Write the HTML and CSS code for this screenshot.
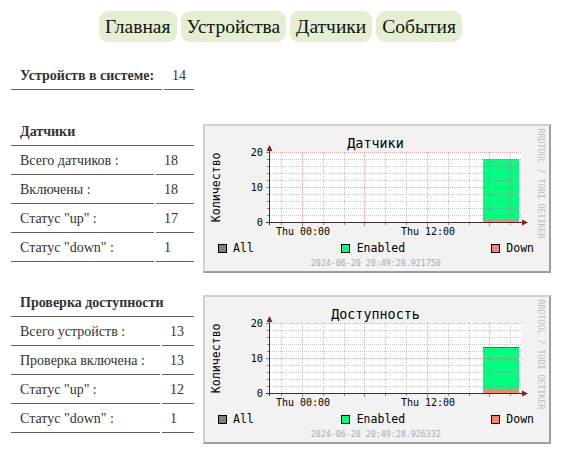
FILE: index.html
```html
<!DOCTYPE html>
<html lang="ru">
<head>
<meta charset="utf-8">
<title>Главная</title>
<link rel="stylesheet" href="styles.css">
</head>
<body>
<nav class="menu">
  <a class="tab" href="#">Главная</a>
  <a class="tab" href="#">Устройства</a>
  <a class="tab" href="#">Датчики</a>
  <a class="tab" href="#">События</a>
</nav>

<div class="stats stats-summary">
  <div class="cell label bold">Устройств в системе:</div>
  <div class="cell value">14</div>
</div>

<section class="block">
  <div class="stats stats-sensors">
    <div class="cell head">Датчики</div>
    <div class="cell label">Всего датчиков :</div><div class="cell value">18</div>
    <div class="cell label">Включены :</div><div class="cell value">18</div>
    <div class="cell label">Статус "up" :</div><div class="cell value">17</div>
    <div class="cell label">Статус "down" :</div><div class="cell value">1</div>
  </div>
  <div class="chart">
    <svg width="344" height="145" viewBox="2 2 344 145" xmlns="http://www.w3.org/2000/svg">
      <rect x="67" y="28" width="252" height="70.5" fill="#ffffff"/>
      <rect x="280" y="35" width="36" height="63.5" fill="#00ff80"/>
      <rect x="280" y="95" width="36" height="3.5" fill="#fa8072"/>
      <path class="minor" d="M78.5 28V98M120.5 28V98M141.5 28V98M182.5 28V98M203.5 28V98M245.5 28V98M266.5 28V98M307.5 28V98M67 35.5H319M67 42.5H319M67 49.5H319M67 56.5H319M67 70.5H319M67 77.5H319M67 84.5H319M67 91.5H319"/>
      <path class="major" d="M99.5 28V98M161.5 28V98M224.5 28V98M286.5 28V98M67 28.5H319M67 63.5H319"/>
      <path class="tick" d="M64 35.5H66M64 42.5H66M64 49.5H66M64 56.5H66M64 70.5H66M64 77.5H66M64 84.5H66M64 91.5H66M63 28.5H66M63 63.5H66M78.5 99V101M120.5 99V101M141.5 99V101M182.5 99V101M203.5 99V101M245.5 99V101M266.5 99V101M307.5 99V101M99.5 99V102M161.5 99V102M224.5 99V102M286.5 99V102"/>
      <path class="axis" d="M66.5 101V25M63 98.5H320"/>
      <path class="arrow" d="M63.5 27L69.5 27L66.5 21Z M319 95.5L319 101.5L325 98.5Z"/>
      <text class="title" x="172.5" y="24.3">Датчики</text>
      <text class="vlabel" transform="translate(17.3 63.3) rotate(-90)">Количество</text>
      <text class="ylab" x="60" y="32">20</text>
      <text class="ylab" x="60" y="67">10</text>
      <text class="ylab" x="60" y="102">0</text>
      <text class="xlab" x="100" y="111">Thu 00:00</text>
      <text class="xlab" x="225" y="111">Thu 12:00</text>
      <rect x="15.5" y="120.5" width="8" height="8" fill="#808080" stroke="#000"/>
      <text class="legend" x="30" y="127.7">All</text>
      <rect x="138.5" y="120.5" width="8" height="8" fill="#00ff80" stroke="#000"/>
      <text class="legend" x="153.7" y="127.7">Enabled</text>
      <rect x="288.5" y="120.5" width="8" height="8" fill="#fa8072" stroke="#000"/>
      <text class="legend" x="303.3" y="127.7">Down</text>
      <text class="stamp" x="172.8" y="141.7">2024-06-20 20:49:28.921750</text>
      <text class="mark" transform="translate(334.5 59.5) rotate(90)">RRDTOOL / TOBI OETIKER</text>
    </svg>
  </div>
</section>

<section class="block">
  <div class="stats stats-avail">
    <div class="cell head">Проверка доступности</div>
    <div class="cell label">Всего устройств :</div><div class="cell value">13</div>
    <div class="cell label">Проверка включена :</div><div class="cell value">13</div>
    <div class="cell label">Статус "up" :</div><div class="cell value">12</div>
    <div class="cell label">Статус "down" :</div><div class="cell value">1</div>
  </div>
  <div class="chart">
    <svg width="344" height="145" viewBox="2 2 344 145" xmlns="http://www.w3.org/2000/svg">
      <rect x="67" y="28" width="252" height="70.5" fill="#ffffff"/>
      <rect x="280" y="52.5" width="36" height="46" fill="#00ff80"/>
      <rect x="280" y="95" width="36" height="3.5" fill="#fa8072"/>
      <path class="allline" d="M280 52.5H316"/>
      <path class="minor" d="M78.5 28V98M120.5 28V98M141.5 28V98M182.5 28V98M203.5 28V98M245.5 28V98M266.5 28V98M307.5 28V98M67 35.5H319M67 42.5H319M67 49.5H319M67 56.5H319M67 70.5H319M67 77.5H319M67 84.5H319M67 91.5H319"/>
      <path class="major" d="M99.5 28V98M161.5 28V98M224.5 28V98M286.5 28V98M67 28.5H319M67 63.5H319"/>
      <path class="tick" d="M64 35.5H66M64 42.5H66M64 49.5H66M64 56.5H66M64 70.5H66M64 77.5H66M64 84.5H66M64 91.5H66M63 28.5H66M63 63.5H66M78.5 99V101M120.5 99V101M141.5 99V101M182.5 99V101M203.5 99V101M245.5 99V101M266.5 99V101M307.5 99V101M99.5 99V102M161.5 99V102M224.5 99V102M286.5 99V102"/>
      <path class="axis" d="M66.5 101V25M63 98.5H320"/>
      <path class="arrow" d="M63.5 27L69.5 27L66.5 21Z M319 95.5L319 101.5L325 98.5Z"/>
      <text class="title" x="172.5" y="24.3">Доступность</text>
      <text class="vlabel" transform="translate(17.3 63.3) rotate(-90)">Количество</text>
      <text class="ylab" x="60" y="32">20</text>
      <text class="ylab" x="60" y="67">10</text>
      <text class="ylab" x="60" y="102">0</text>
      <text class="xlab" x="100" y="111">Thu 00:00</text>
      <text class="xlab" x="225" y="111">Thu 12:00</text>
      <rect x="15.5" y="120.5" width="8" height="8" fill="#808080" stroke="#000"/>
      <text class="legend" x="30" y="127.7">All</text>
      <rect x="138.5" y="120.5" width="8" height="8" fill="#00ff80" stroke="#000"/>
      <text class="legend" x="153.7" y="127.7">Enabled</text>
      <rect x="288.5" y="120.5" width="8" height="8" fill="#fa8072" stroke="#000"/>
      <text class="legend" x="303.3" y="127.7">Down</text>
      <text class="stamp" x="172.8" y="141.7">2024-06-20 20:49:28.926332</text>
      <text class="mark" transform="translate(334.5 59.5) rotate(90)">RRDTOOL / TOBI OETIKER</text>
    </svg>
  </div>
</section>
</body>
</html>
```

FILE: styles.css
```css
body {
  margin: 8px;
  font-family: "Liberation Serif", "Times New Roman", serif;
  font-size: 14px;
  color: #333;
  background: #fff;
}

.menu {
  display: flex;
  justify-content: center;
  gap: 4px;
  margin-top: 3px;
  padding-right: 6px;
}

.tab {
  display: block;
  padding: 4px 6px;
  font-size: 19.5px;
  line-height: 23px;
  color: #111;
  text-decoration: none;
  background: #e3efd0;
  border-radius: 9px;
}

.stats {
  display: grid;
  column-gap: 2px;
  row-gap: 2px;
  margin-left: 3px;
  align-self: flex-start;
}

.stats-summary {
  grid-template-columns: 151px 30px;
  margin-top: 21px;
}

.stats-sensors {
  grid-template-columns: 143px 38px;
}

.stats-avail {
  grid-template-columns: 149px 32px;
}

.cell {
  padding: 5px 8px 5px 9px;
  line-height: 16px;
  border-bottom: 1px solid #665f5b;
  white-space: nowrap;
}

.value {
  padding-left: 8px;
}

.bold,
.head {
  font-weight: bold;
}

.head {
  grid-column: 1 / span 2;
}

.block {
  display: flex;
  align-items: flex-start;
  gap: 9px;
  margin-bottom: 17px;
}

.stats-summary + .block {
  margin-top: 29px;
}

.chart {
  margin-top: 5px;
  width: 344px;
  height: 145px;
  border: 2px solid;
  border-color: #cfcfcf #9e9e9e #9e9e9e #cfcfcf;
  background: #f2f2f2;
}

.chart svg {
  display: block;
}

.chart text {
  font-family: "DejaVu Sans Mono", monospace;
  fill: #000;
}

.minor {
  fill: none;
  stroke: rgba(130, 130, 130, 0.45);
  stroke-width: 1;
  stroke-dasharray: 1 1;
}

.major {
  fill: none;
  stroke: rgba(230, 80, 80, 0.5);
  stroke-width: 1;
  stroke-dasharray: 1 1;
}

.tick {
  fill: none;
  stroke: #8a8a8a;
  stroke-width: 1;
}

.axis {
  fill: none;
  stroke: #3a2e2e;
  stroke-width: 1;
}

.arrow {
  fill: #7f1f1f;
}

.allline {
  stroke: #666;
  stroke-width: 1;
}

.chart .title {
  font-size: 13.4px;
  text-anchor: middle;
}

.chart .vlabel {
  font-size: 11.6px;
  text-anchor: middle;
}

.chart .ylab {
  font-size: 10.2px;
  text-anchor: end;
}

.chart .xlab {
  font-size: 10px;
  text-anchor: middle;
}

.chart .legend {
  font-size: 11.5px;
}

.chart .stamp {
  font-size: 8.3px;
  text-anchor: middle;
  fill: #ababab;
}

.chart .mark {
  font-size: 8.3px;
  text-anchor: middle;
  fill: #bdbdbd;
}
```
